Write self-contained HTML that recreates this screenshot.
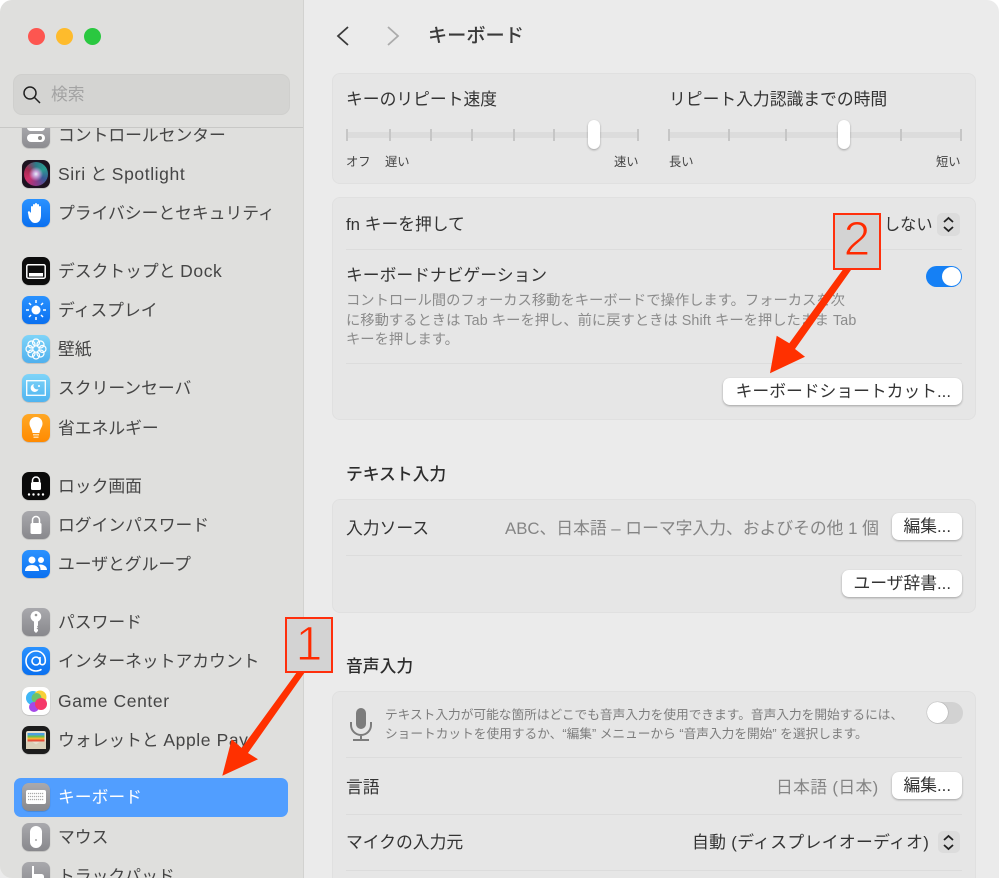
<!DOCTYPE html>
<html lang="ja"><head><meta charset="utf-8"><title>キーボード</title>
<style>
html,body{margin:0;padding:0;background:#fff}
#w{position:relative;width:999px;height:878px;overflow:hidden;background:#ebebeb;font-family:"Liberation Sans","Noto Sans CJK JP",sans-serif;border-radius:12px 12px 0 0}
#w div,#w svg{position:absolute}
.t{white-space:nowrap;line-height:24px;height:24px;font-size:16.8px;color:#333;margin-top:1px}
.n{left:58px;color:#454545}
.la{letter-spacing:.6px;font-size:17.5px}
.s{font-size:14.3px;color:#8b8b8b}
.s .la{font-size:14.3px;letter-spacing:.15px}
.x{font-size:12.7px;color:#7d7d7d}
.m{font-size:12.3px;color:#444}
.h{font-weight:500;color:#2c2c2c}
.g{color:#858585}
.p{left:332px;width:642px;background:#e6e6e6;border:1px solid #e0e0e0;border-radius:8px}
.l{left:346px;width:616px;height:1px;background:#dcdcdc}
.b{background:#fff;border-radius:7px;box-shadow:0 1px 2px rgba(0,0,0,.3);height:27px}
.b div{white-space:nowrap;line-height:28px;font-size:16.8px;color:#333;right:11px;top:0}
.i{left:22px;width:28px;height:28px;border-radius:7px;box-shadow:0 .5px 1px rgba(0,0,0,.25);overflow:hidden}
.tk{width:2px;height:12px;top:129px;background:#c6c6c6}
.th{width:12px;height:29px;top:120px;background:#fff;border-radius:6px;box-shadow:0 1px 2px rgba(0,0,0,.3)}
.tr{height:6px;top:132px;background:#dcdcdc}
.bl{background:linear-gradient(#2a92ff,#0a70f0)}
.gr{background:linear-gradient(#a9a9ad,#88888c)}
.bx{background:#d3d3d3;border:2px solid #ff2f0c;box-sizing:border-box;color:#ff2a00;text-align:center;-webkit-text-stroke:1.100px #d3d3d3}
</style></head><body><div id="w">

<!-- sidebar -->
<div style="left:0;top:0;width:303px;height:878px;background:#dfdfdd;border-right:1px solid #d2d2d0;border-radius:12px 0 0 12px"></div>
<div style="left:28px;top:27.5px;width:17px;height:17px;border-radius:50%;background:#fd5650"></div>
<div style="left:56px;top:27.5px;width:17px;height:17px;border-radius:50%;background:#febb2c"></div>
<div style="left:84px;top:27.5px;width:17px;height:17px;border-radius:50%;background:#2ac840"></div>
<div style="left:13px;top:74px;width:275px;height:39px;background:#d4d4d2;border:1px solid #cfcfcd;border-radius:9px"></div>
<svg style="left:21px;top:85px" width="20" height="19" viewBox="0 0 20 19" fill="none" stroke="#222" stroke-width="1.5"><circle cx="9" cy="8" r="6"/><path d="M13.5 12.5L19 18"/></svg>
<div class="t" style="left:51px;top:82px;color:#a3a3a3">検索</div>
<div style="left:0;top:127px;width:303px;height:1px;background:#c8c8c6"></div>

<div style="left:0;top:128px;width:303px;height:750px;overflow:hidden">
 <div class="i gr" style="top:-8px;background:linear-gradient(#b0b0b4,#8c8c90)">
  <div style="left:5px;top:4px;width:18px;height:7px;border-radius:4px;background:#fff"></div>
  <div style="left:5px;top:14px;width:18px;height:8px;border-radius:4px;background:#fff"></div>
  <div style="left:16px;top:16px;width:4px;height:4px;border-radius:50%;background:#888"></div>
 </div>
</div>
<div class="t n" style="top:123px;clip-path:inset(4px 0 0 0)">コントロールセンター</div>

<div class="i" style="top:160px;background:#1d1320"><div style="left:2px;top:2px;width:24px;height:24px;border-radius:50%;background:radial-gradient(circle at 50% 50%,#e8f2fa 0,#c8a0d8 16%,transparent 42%),conic-gradient(#2f7a88,#2a9a90,#3a5a98,#8c3a88,#d0306a,#a02a50,#2f7a88)"></div></div>
<div class="t n" style="top:161px"><span class="la">Siri</span> と <span class="la">Spotlight</span></div>

<div class="i bl" style="top:199px"><svg style="left:5px;top:3px" width="18" height="22" viewBox="0 0 18 22" fill="#fff"><path d="M4 11V5a1 1 0 012 0V3a1 1 0 012 0V2a1 1 0 012 0v1a1 1 0 012 0v2a1 1 0 012 0v8c0 5-2 8-6 8-3 0-4-2-6-5L1 11c-.7-1.500 1-2.500 2-1.200z"/></svg></div>
<div class="t n" style="top:201px">プライバシーとセキュリティ</div>

<div class="i" style="top:257px;background:#0c0c0c"><svg style="left:4px;top:7px" width="20" height="15" viewBox="0 0 20 15"><rect x=".8" y=".8" width="18.400" height="13.400" rx="1.500" fill="none" stroke="#fff" stroke-width="1.500"/><rect x="3" y="9" width="14" height="3.500" fill="#fff"/></svg></div>
<div class="t n" style="top:258px">デスクトップと <span class="la">Dock</span></div>

<div class="i bl" style="top:296px"><svg style="left:4px;top:4px" width="20" height="20" viewBox="0 0 20 20"><circle cx="10" cy="10" r="4.500" fill="#fff"/><path d="M10 0v3M10 17v3M0 10h3M17 10h3M3 3l2 2M15 15l2 2M3 17l2-2M15 5l2-2" stroke="#fff" stroke-width="1.500"/></svg></div>
<div class="t n" style="top:298px">ディスプレイ</div>

<div class="i" style="top:335px;background:linear-gradient(#7fd4f8,#4fb0ee)"><svg style="left:3px;top:3px" width="22" height="22" viewBox="0 0 22 22" fill="none" stroke="#fff" stroke-width="1.200"><circle cx="11" cy="4.500" r="3.500"/><circle cx="11" cy="17.500" r="3.500"/><circle cx="4.500" cy="11" r="3.500"/><circle cx="17.500" cy="11" r="3.500"/><circle cx="6.500" cy="6.500" r="3.500"/><circle cx="15.500" cy="6.500" r="3.500"/><circle cx="6.500" cy="15.500" r="3.500"/><circle cx="15.500" cy="15.500" r="3.500"/></svg></div>
<div class="t n" style="top:337px">壁紙</div>

<div class="i" style="top:374px;background:linear-gradient(#7fd4f8,#4fb4f0)"><svg style="left:4px;top:6px" width="20" height="16" viewBox="0 0 20 16"><rect x=".7" y=".7" width="18.600" height="14.600" fill="none" stroke="#fff" stroke-width="1.300"/><path d="M8 4a4 4 0 104.500 5A3.500 3.500 0 018 4z" fill="#fff"/><circle cx="13" cy="6" r="1" fill="#fff"/></svg></div>
<div class="t n" style="top:376px">スクリーンセーバ</div>

<div class="i" style="top:414px;background:linear-gradient(#ffa825,#ff8a00)"><svg style="left:7px;top:3px" width="14" height="23" viewBox="0 0 14 23"><path d="M7 0C3 0 .5 3 .5 6.500c0 3.500 2.500 5 3 9.500h7c.5-4.500 3-6 3-9.500C13.500 3 11 0 7 0z" fill="#fff"/><rect x="4" y="17" width="6" height="1.500" fill="#ffd9a0"/><rect x="4.500" y="19.500" width="5" height="1.500" fill="#ffd9a0"/></svg></div>
<div class="t n" style="top:416px">省エネルギー</div>

<div class="i" style="top:472px;background:#0a0a0a"><svg style="left:4px;top:3px" width="20" height="22" viewBox="0 0 20 22"><path d="M6.500 7V5.500a3.500 3.500 0 017 0V7" fill="none" stroke="#fff" stroke-width="1.500"/><rect x="5" y="7" width="10" height="8" rx="1.500" fill="#fff"/><g fill="#fff"><circle cx="3" cy="19.500" r="1.200"/><circle cx="7.500" cy="19.500" r="1.200"/><circle cx="12.500" cy="19.500" r="1.200"/><circle cx="17" cy="19.500" r="1.200"/></g></svg></div>
<div class="t n" style="top:474px">ロック画面</div>

<div class="i gr" style="top:511px"><svg style="left:7px;top:4px" width="14" height="20" viewBox="0 0 14 20"><path d="M3.500 8V5a3.500 3.500 0 017 0v3" fill="none" stroke="#fff" stroke-width="1.500"/><rect x="1.500" y="8" width="11" height="11" rx="1.500" fill="#fff"/></svg></div>
<div class="t n" style="top:513px">ログインパスワード</div>

<div class="i bl" style="top:550px"><svg style="left:3px;top:6px" width="22" height="16" viewBox="0 0 22 16" fill="#fff"><circle cx="7" cy="4" r="3.500"/><circle cx="16" cy="4" r="3"/><path d="M0 15c0-4 3-6 7-6s7 2 7 6z"/><path d="M15 8.500c4 0 7 2 7 5.500h-6.500c0-2-.5-4-2-5z"/></svg></div>
<div class="t n" style="top:552px">ユーザとグループ</div>

<div class="i gr" style="top:608px"><svg style="left:8px;top:3px" width="12" height="22" viewBox="0 0 12 22" fill="#fff"><path d="M6 0a5.500 5.500 0 00-2 10.600V20l2 2 2-2v-1.500l-1.500-1 1.500-1-1-1 1-1v-4A5.500 5.500 0 006 0z"/><circle cx="6" cy="4" r="1.300" fill="#999"/></svg></div>
<div class="t n" style="top:610px">パスワード</div>

<div class="i bl" style="top:647px"><svg style="left:3px;top:3px" width="22" height="22" viewBox="0 0 22 22" fill="none" stroke="#fff" stroke-width="1.600"><circle cx="11" cy="11" r="4"/><path d="M15 7v5.500c0 3 4.500 3 5.200-.5C21 6 17 1 11 1 5.500 1 1 5.500 1 11s4.500 10 10 10c2 0 4-.5 5.500-1.700"/></svg></div>
<div class="t n" style="top:649px">インターネットアカウント</div>

<div class="i" style="top:687px;background:#fff"><svg style="left:3px;top:3px" width="23" height="23" viewBox="0 0 23 23"><circle cx="8" cy="8" r="7" fill="#3fb6f5"/><circle cx="15" cy="7" r="6.500" fill="#f7d038"/><circle cx="11.500" cy="8" r="5" fill="#6cc36a"/><circle cx="9" cy="17" r="5" fill="#a648e8"/><circle cx="16" cy="14" r="6" fill="#f5386a"/></svg></div>
<div class="t n" style="top:688px"><span class="la">Game Center</span></div>

<div class="i" style="top:726px;background:#1c1c1c"><svg style="left:4px;top:5px" width="20" height="18" viewBox="0 0 20 18"><rect x="0" y="0" width="20" height="18" rx="2" fill="#e6dfcc"/><rect x="1.500" y="2" width="17" height="2.500" fill="#4d9fe0"/><rect x="1.500" y="4.500" width="17" height="2" fill="#6cc050"/><rect x="1.500" y="6.500" width="17" height="2" fill="#f2b530"/><rect x="1.500" y="8.500" width="17" height="2" fill="#e8503a"/><path d="M0 10.500h6l4 3 4-3h6V18H0z" fill="#d9d0b8"/></svg></div>
<div class="t n" style="top:727px">ウォレットと <span class="la">Apple Pay</span></div>

<div style="left:14px;top:778px;width:274px;height:39px;background:#519eff;border-radius:7px"></div>
<div class="i gr" style="top:783px"><svg style="left:4px;top:7px" width="20" height="14" viewBox="0 0 20 14"><rect width="20" height="14" rx="2" fill="#fff"/><path d="M2 3.500h16M2 6.500h16M2 9.500h16" stroke="#aaa" stroke-width="1.300" stroke-dasharray="1.200 .8"/></svg></div>
<div class="t n" style="top:785px;color:#fff">キーボード</div>

<div class="i gr" style="top:823px"><div style="left:8px;top:3px;width:12px;height:22px;background:#fff;border-radius:6px"></div><div style="left:13px;top:16px;width:2px;height:2px;background:#aaa;border-radius:50%"></div></div>
<div class="t n" style="top:825px">マウス</div>

<div class="i gr" style="top:862px"><svg style="left:7px;top:2px" width="16" height="24" viewBox="0 0 16 24" fill="#fff"><path d="M3 2h2v8h7c2 0 3 1 3 3v11H4L0 15l3 1z"/></svg></div>
<div class="t n" style="top:864px">トラックパッド</div>

<!-- nav -->
<svg style="left:334px;top:25px" width="18" height="22" viewBox="0 0 18 22" fill="none" stroke="#3a3a3a" stroke-width="1.800"><path d="M14 2L4 11l10 9"/></svg>
<svg style="left:384px;top:25px" width="18" height="22" viewBox="0 0 18 22" fill="none" stroke="#ababab" stroke-width="1.800"><path d="M4 2l10 9-10 9"/></svg>
<div class="t h" style="left:428px;top:24px;font-size:19.200px;color:#3a3a3a">キーボード</div>

<!-- panel 1 -->
<div class="p" style="top:73px;height:109px"></div>
<div class="t" style="left:346px;top:87px">キーのリピート速度</div>
<div class="t" style="left:669px;top:87px">リピート入力認識までの時間</div>
<div class="tr" style="left:346px;width:293px"></div>
<div class="tr" style="left:669px;width:292px"></div>
<div class="tk" style="left:346px"></div><div class="tk" style="left:389px"></div><div class="tk" style="left:430px"></div><div class="tk" style="left:471px"></div><div class="tk" style="left:513px"></div><div class="tk" style="left:553px"></div><div class="tk" style="left:637px"></div>
<div class="tk" style="left:668px"></div><div class="tk" style="left:728px"></div><div class="tk" style="left:785px"></div><div class="tk" style="left:900px"></div><div class="tk" style="left:960px"></div>
<div class="th" style="left:587.500px"></div><div class="th" style="left:837.500px"></div>
<div class="t m" style="left:346px;top:149px">オフ</div>
<div class="t m" style="left:385px;top:149px">遅い</div>
<div class="t m" style="left:614px;top:149px">速い</div>
<div class="t m" style="left:669px;top:149px">長い</div>
<div class="t m" style="left:936px;top:149px">短い</div>

<!-- panel 2 -->
<div class="p" style="top:197px;height:221px"></div>
<div class="t" style="left:346px;top:212px">fn キーを押して</div>
<div class="t" style="left:884px;top:212px;font-size:16.200px">しない</div>
<div style="left:937px;top:213px;width:23px;height:23px;background:#dcdcdc;border-radius:5px"></div>
<svg style="left:942px;top:216px" width="13" height="17" viewBox="0 0 13 17" fill="none" stroke="#222" stroke-width="1.800"><path d="M2 6l4.500-4L11 6M2 11l4.500 4 4.500-4"/></svg>
<div class="l" style="top:249px"></div>
<div class="t" style="left:346px;top:263px">キーボードナビゲーション</div>
<div style="left:926px;top:266px;width:36px;height:21px;border-radius:11px;background:#1580f5"></div>
<div style="left:942px;top:267px;width:19px;height:19px;border-radius:50%;background:#fff"></div>
<div class="t s" style="left:346px;top:288px">コントロール間のフォーカス移動をキーボードで操作します。フォーカスを次</div>
<div class="t s" style="left:346px;top:307.500px">に移動するときは <span class="la">Tab</span> キーを押し、前に戻すときは <span class="la">Shift</span> キーを押したまま <span class="la">Tab</span></div>
<div class="t s" style="left:346px;top:327px">キーを押します。</div>
<div class="l" style="top:363px"></div>
<div class="b" style="left:723px;top:378px;width:239px"><div>キーボードショートカット...</div></div>

<!-- panel 3 -->
<div class="t h" style="left:346px;top:462px">テキスト入力</div>
<div class="p" style="top:499px;height:112px"></div>
<div class="t" style="left:346px;top:516px">入力ソース</div>
<div class="t g" style="left:505px;top:516px">ABC、日本語 – ローマ字入力、およびその他 1 個</div>
<div class="b" style="left:892px;top:513px;width:70px"><div>編集...</div></div>
<div class="l" style="top:555px"></div>
<div class="b" style="left:842px;top:570px;width:120px"><div>ユーザ辞書...</div></div>

<!-- panel 4 -->
<div class="t h" style="left:346px;top:654px">音声入力</div>
<div class="p" style="top:691px;height:220px"></div>
<svg style="left:349px;top:708px" width="24" height="33" viewBox="0 0 24 33" fill="none" stroke="#7c7c7c" stroke-width="2"><rect x="7" y="0" width="10" height="21" rx="5" fill="#7c7c7c" stroke="none"/><path d="M2 14v3a10 10 0 0020 0v-3M12 27v5M4 32h16"/></svg>
<div class="t x" style="left:385px;top:702px">テキスト入力が可能な箇所はどこでも音声入力を使用できます。音声入力を開始するには、</div>
<div class="t x" style="left:385px;top:721px">ショートカットを使用するか、“編集” メニューから “音声入力を開始” を選択します。</div>
<div style="left:927px;top:702px;width:36px;height:22px;border-radius:11px;background:#d2d2d2"></div>
<div style="left:927px;top:702px;width:21px;height:21px;border-radius:50%;background:#fff;box-shadow:0 0 1px rgba(0,0,0,.5)"></div>
<div class="l" style="top:757px"></div>
<div class="t" style="left:346px;top:775px">言語</div>
<div class="t g" style="left:776px;top:775px;letter-spacing:.35px">日本語 (日本)</div>
<div class="b" style="left:892px;top:772px;width:70px"><div>編集...</div></div>
<div class="l" style="top:814px"></div>
<div class="t" style="left:346px;top:830px">マイクの入力元</div>
<div class="t" style="left:692px;top:830px;letter-spacing:.35px">自動 (ディスプレイオーディオ)</div>
<div style="left:938px;top:831px;width:22px;height:22px;background:#dcdcdc;border-radius:5px"></div>
<svg style="left:942px;top:834px" width="13" height="17" viewBox="0 0 13 17" fill="none" stroke="#222" stroke-width="1.800"><path d="M2 6l4.500-4L11 6M2 11l4.500 4 4.500-4"/></svg>
<div class="l" style="top:870px"></div>

<!-- annotations -->
<svg style="left:0;top:0;z-index:3" width="999" height="878" viewBox="0 0 999 878" fill="#ff3000"><path d="M297 672L305 672 248 753 258 759.300 222.300 775.700 231.700 739.300 241.700 748z"/><path d="M843.300 269L851.700 269 795 349 805 356.700 770 373.300 776.700 335.700 789.300 343.300z"/></svg>
<div class="bx" style="left:285px;top:617px;width:48px;height:56px;z-index:4;font-size:48px;line-height:52px">1</div>
<div class="bx" style="left:833px;top:213px;width:48px;height:57px;z-index:4;font-size:48px;line-height:50px">2</div>
</div></body></html>
